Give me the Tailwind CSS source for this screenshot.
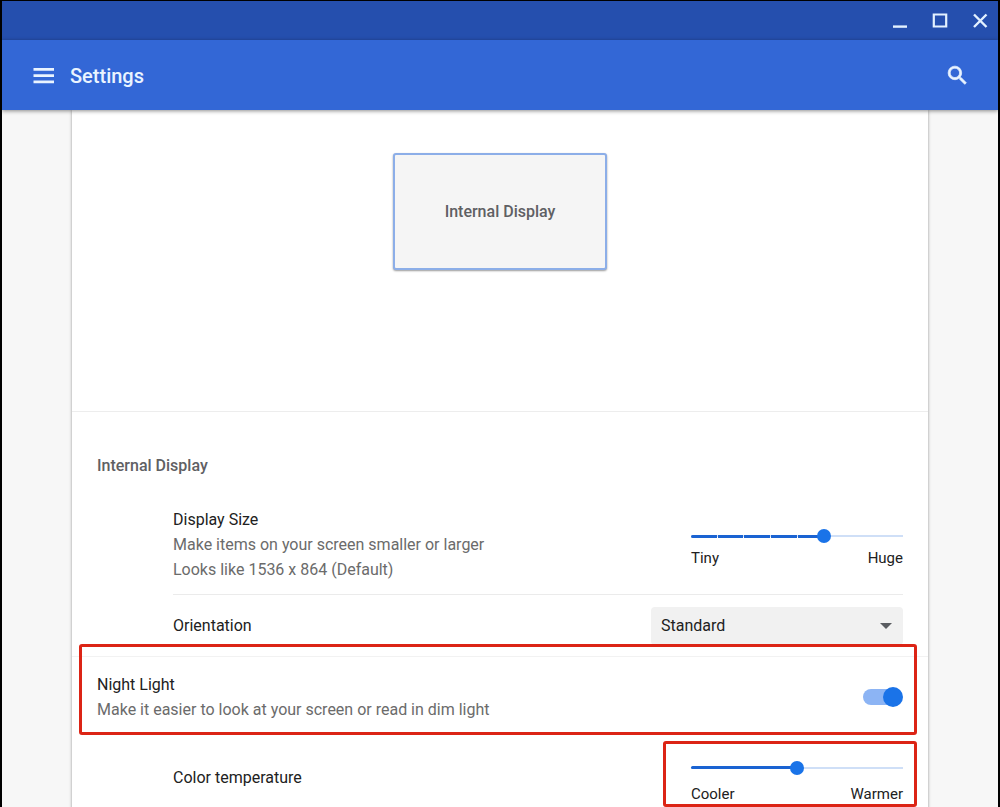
<!DOCTYPE html>
<html lang="en">
<head>
<meta charset="utf-8">
<title>Settings</title>
<script src="https://cdn.jsdelivr.net/npm/@tailwindcss/browser@4"></script>
</head>
<body class="bg-[#f7f7f7]">
<div class="flex h-screen flex-col overflow-hidden border-x-2 border-t border-black bg-[#f7f7f7] font-['Roboto',sans-serif] text-base leading-[25px] text-[#212121]">
  <div class="flex h-[39px] shrink-0 items-center justify-end gap-5 bg-[#254fae] px-2 text-[#e3f1ff]">
    <button aria-label="Minimize" class="size-5"><svg viewBox="0 0 20 20" class="size-5" fill="none" stroke="currentColor" stroke-width="2.4"><path d="M3 15.600h14"/></svg></button>
    <button aria-label="Maximize" class="size-5"><svg viewBox="0 0 20 20" class="size-5" fill="none" stroke="currentColor" stroke-width="2.2"><path d="M3.800 3.500h12.400v12H3.800z"/></svg></button>
    <button aria-label="Close" class="size-5"><svg viewBox="0 0 20 20" class="size-5" fill="none" stroke="currentColor" stroke-width="2.4"><path d="M4 3.500l12.500 12.500M16.500 3.500L4 16"/></svg></button>
  </div>
  <header class="z-10 flex h-[70px] shrink-0 items-center bg-[#3367d6] pr-7 pl-[31px] text-[#eaf4ff] shadow-[0_1px_4px_rgba(0,0,0,0.45)]">
    <button aria-label="Menu" class="size-[22px]"><svg viewBox="0 0 22 22" class="size-[22px]" fill="currentColor"><path d="M.5 4h20.500v2.800H.5zM.5 10.200h20.500v2.800H.5zM.5 16.400h20.500v2.800H.5z"/></svg></button>
    <h1 class="ml-[15px] grow pt-px text-xl font-medium">Settings</h1>
    <button aria-label="Search" class="size-[25px]"><svg viewBox="0 0 24 24" class="size-[25px]" fill="currentColor" stroke="currentColor" stroke-width=".7"><path d="M15.500 14h-.79l-.28-.27A6.470 6.470 0 0 0 16 9.500 6.500 6.500 0 1 0 9.500 16c1.610 0 3.090-.59 4.230-1.570l.27.28v.79l5 4.990L20.490 19l-4.990-5zm-6 0C7.010 14 5 11.990 5 9.500S7.010 5 9.500 5 14 7.010 14 9.500 11.990 14 9.500 14z"/></svg></button>
  </header>
  <main class="mx-[70px] grow bg-white shadow-[0_0_3px_rgba(0,0,0,0.4)]">
    <section class="flex h-[302px] justify-center border-b border-[#ededed] pt-[43px]">
      <button class="h-[117px] w-[214px] rounded-[3px] border-2 border-[#8caee8] bg-[#f5f5f5] font-medium text-[#5f6063] shadow-[0_1px_2px_rgba(0,0,0,0.4)]">Internal Display</button>
    </section>
    <section class="pt-[41px]">
      <h2 class="px-[25px] font-medium text-[#5f6063]">Internal Display</h2>
      <div class="mr-[25px] ml-[101px] flex items-center justify-between border-b border-[#ebebeb] pt-[29px] pb-3">
        <div>
          <label for="size">Display Size</label>
          <p class="text-[#6b6b6b]">Make items on your screen smaller or larger</p>
          <p class="text-[#6b6b6b]">Looks like 1536 x 864 (Default)</p>
        </div>
        <div class="w-[212px] pt-2.5">
          <div class="relative flex h-4 items-center bg-[linear-gradient(#cfdff7,#cfdff7)] bg-[length:100%_2px] bg-center bg-no-repeat">
            <span class="flex h-[3px] w-5/8 gap-px">
              <span class="grow rounded-l-sm bg-[#1a63d2]"></span><span class="grow bg-[#1a63d2]"></span><span class="grow bg-[#1a63d2]"></span><span class="grow bg-[#1a63d2]"></span><span class="grow bg-[#1a63d2]"></span>
            </span>
            <input id="size" type="range" min="0" max="8" value="5" class="absolute -inset-x-[7px] top-0 h-4 appearance-none bg-transparent [&::-webkit-slider-thumb]:size-[14px] [&::-webkit-slider-thumb]:appearance-none [&::-webkit-slider-thumb]:rounded-full [&::-webkit-slider-thumb]:bg-[#1a73e8]">
          </div>
          <div class="flex justify-between pt-0.5 text-[15px]"><span>Tiny</span><span>Huge</span></div>
        </div>
      </div>
      <div class="mr-[25px] ml-[101px] flex h-[61px] items-center justify-between">
        <label for="orientation">Orientation</label>
        <div class="relative w-[252px]">
          <select id="orientation" class="h-[38px] w-full appearance-none rounded-sm bg-[#f1f1f1] px-[10px]"><option>Standard</option><option>90°</option><option>180°</option><option>270°</option></select>
          <svg viewBox="0 0 12 6" class="pointer-events-none absolute top-4 right-[11px] h-1.5 w-3" fill="#5a5d61"><path d="M0 0h12L6 6z"/></svg>
        </div>
      </div>
      <div class="relative flex items-center justify-between border-t border-[#f2f2f2] px-[25px] pt-[15px] pb-4">
        <div>
          <label for="night">Night Light</label>
          <p class="text-[#6b6b6b]">Make it easier to look at your screen or read in dim light</p>
        </div>
        <span class="relative flex h-5 w-10 items-center">
          <input id="night" type="checkbox" role="switch" checked class="peer h-4 w-[34px] appearance-none rounded-full bg-[#c4c4c4] checked:bg-[#8cb4f4]">
          <span class="pointer-events-none absolute top-0 left-0 size-5 rounded-full bg-white peer-checked:left-5 peer-checked:bg-[#1a73e8]"></span>
        </span>
        <div class="pointer-events-none absolute -top-[13px] right-[11px] left-[7px] h-[91px] rounded-[3px] border-3 border-[#dc2415]"></div>
      </div>
      <div class="relative mr-[25px] ml-[101px] flex h-[78px] items-center justify-between">
        <label for="temp">Color temperature</label>
        <div class="w-[212px] pt-3">
          <div class="relative flex h-4 items-center bg-[linear-gradient(#cfdff7,#cfdff7)] bg-[length:100%_2px] bg-center bg-no-repeat">
            <span class="h-[3px] w-1/2 rounded-sm bg-[#1a63d2]"></span>
            <input id="temp" type="range" min="0" max="100" value="50" class="absolute -inset-x-[7px] top-0 h-4 appearance-none bg-transparent [&::-webkit-slider-thumb]:size-[14px] [&::-webkit-slider-thumb]:appearance-none [&::-webkit-slider-thumb]:rounded-full [&::-webkit-slider-thumb]:bg-[#1a73e8]">
          </div>
          <div class="flex justify-between pt-1.5 text-[15px]"><span>Cooler</span><span>Warmer</span></div>
        </div>
        <div class="pointer-events-none absolute top-[3px] -right-[14px] h-[66px] w-[254px] rounded-[3px] border-3 border-[#dc2415]"></div>
      </div>
    </section>
  </main>
</div>
</body>
</html>
